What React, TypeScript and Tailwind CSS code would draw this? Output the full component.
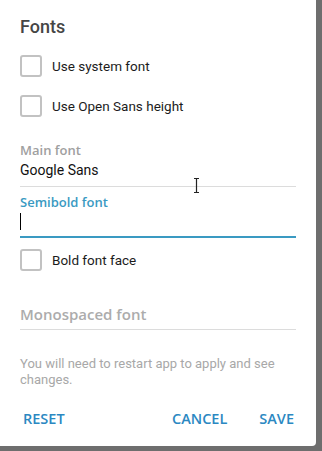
import React from "react";

const gs = { fontFamily: "Roboto, 'Liberation Sans', sans-serif" };
const os = { fontFamily: "'Open Sans', 'Liberation Sans', sans-serif" };

function Check({ label, className = "" }: { label: string; className?: string }) {
  return (
    <div className={"flex items-center h-[22px] " + className}>
      <div className="w-[22px] h-[22px] rounded-[3px] border-2 border-[#c2c2c2] bg-white shrink-0" />
      <span className="ml-[10px] text-[13.5px] text-[#1c1c1c] leading-[20px]" style={gs}>
        {label}
      </span>
    </div>
  );
}

export default function App() {
  return (
    <div className="w-[322px] h-[451px] bg-[#6e6e6e] overflow-hidden">
      <div className="relative w-[316px] h-[446px] bg-white rounded-br-[4px] pl-5 pr-5">
        <div className="pt-[15px] h-[38px] text-[18px] leading-[24px] font-medium text-[#454545]" style={gs}>
          Fonts
        </div>
        <Check label="Use system font" className="mt-[17px]" />
        <Check label="Use Open Sans height" className="mt-[18px]" />

        <div className="mt-[25px] w-[276px]">
          <div className="h-[16px] leading-[16px] text-[13px] font-semibold text-[#a0a0a0]" style={os}>
            Main font
          </div>
          <div className="h-[29px] border-b border-[#dcdcdc] pt-[2px] text-[14px] leading-[20px] text-[#111]" style={gs}>
            Google Sans
          </div>
        </div>

        <div className="mt-[7px] w-[276px]">
          <div className="h-[16px] leading-[16px] text-[13px] font-semibold text-[#3a9ac2]" style={os}>
            Semibold font
          </div>
          <div className="h-[28px] border-b-2 border-[#3a9ac2] pt-[3px]">
            <div className="w-[1px] h-[17px] bg-black" />
          </div>
        </div>

        <Check label="Bold font face" className="mt-[11px]" />

        <div className="mt-[29px] w-[276px] h-[30px] pt-[4px] border-b border-[#dcdcdc] text-[15px] leading-[20px] font-semibold text-[#acacac]" style={os}>
          Monospaced font
        </div>

        <div className="mt-[26px] text-[13px] leading-[16px] text-[#a8a8a8] pr-[6px]" style={gs}>
          You will need to restart app to apply and see changes.
        </div>

        <div className="mt-[21px] flex items-center h-[20px] text-[14.5px] font-semibold text-[#2b88c2] leading-[20px]" style={os}>
          <span className="ml-[3px]">RESET</span>
          <span className="ml-auto">CANCEL</span>
          <span className="ml-[32px] mr-[2px]">SAVE</span>
        </div>

        <svg className="absolute left-[192px] top-[177px]" width="9" height="17" viewBox="0 0 9 17">
          <path d="M2 1.5h5M2 15.5h5M4.5 1.5v14" stroke="#222" strokeWidth="1.2" fill="none" />
        </svg>
      </div>
    </div>
  );
}
